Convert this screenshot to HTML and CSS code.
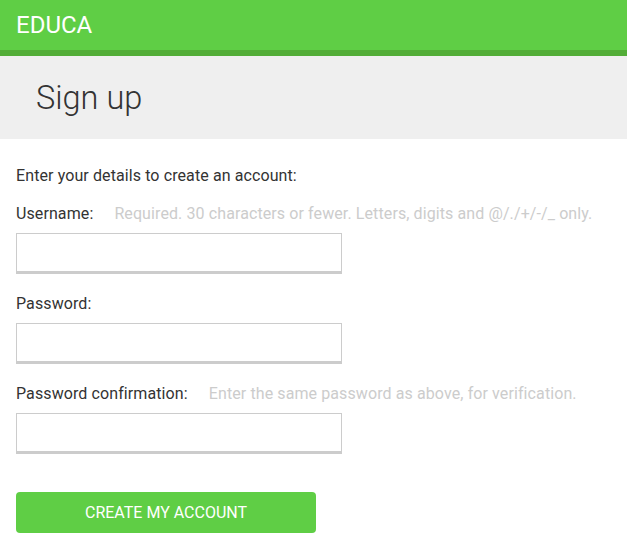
FILE: index.html
```html
<!DOCTYPE html>
<html>
<head>
<meta charset="utf-8">
<title>Sign up</title>
<link rel="stylesheet" href="styles.css">
</head>
<body>
<header class="topbar"><span class="logo">EDUCA</span></header>
<div class="title-band"><h1 class="title">Sign up</h1></div>
<main class="content">
  <p class="intro">Enter your details to create an account:</p>
  <form class="form">
    <div class="field">
      <div class="label-row"><label class="label">Username:</label><span class="help">Required. 30 characters or fewer. Letters, digits and @/./+/-/_ only.</span></div>
      <input class="input" type="text">
    </div>
    <div class="field">
      <div class="label-row"><label class="label">Password:</label></div>
      <input class="input" type="password">
    </div>
    <div class="field">
      <div class="label-row"><label class="label">Password confirmation:</label><span class="help">Enter the same password as above, for verification.</span></div>
      <input class="input" type="password">
    </div>
    <button class="submit" type="button">CREATE MY ACCOUNT</button>
  </form>
</main>
</body>
</html>
```
FILE: styles.css
```css
html, body {
  margin: 0;
  padding: 0;
  background: #fff;
  font-family: Roboto, "Liberation Sans", sans-serif;
  color: #333;
}
.topbar {
  height: 50px;
  background: #5fce45;
  border-bottom: 6px solid #52ad37;
  padding-left: 16px;
  display: flex;
  align-items: center;
}
.logo {
  color: #fff;
  font-size: 24px;
  line-height: 50px;
}
.title-band {
  background: #efefef;
  height: 83px;
  display: flex;
  align-items: center;
  padding-left: 36px;
}
.title {
  margin: 0;
  font-size: 32.5px;
  font-weight: 300;
  color: #333;
  line-height: 40px;
}
.content {
  padding: 0 16px;
}
.intro {
  margin: 27px 0 0;
  font-size: 16px;
  line-height: 20px;
  letter-spacing: 0.1px;
}
.form {
  display: flex;
  flex-direction: column;
}
.field {
  margin-top: 18px;
  display: flex;
  flex-direction: column;
  gap: 9px;
}
.field + .field {
  margin-top: 20px;
}
.label-row {
  display: flex;
  gap: 21px;
  font-size: 16px;
  line-height: 20px;
  letter-spacing: 0.1px;
}
.help {
  color: #ccc;
}
.input {
  box-sizing: border-box;
  width: 326px;
  height: 41px;
  margin: 0;
  border: 1px solid #ccc;
  border-bottom: 3px solid #ccc;
  background: #fff;
  outline: none;
}
.submit {
  margin-top: 38px;
  width: 300px;
  height: 41px;
  border: none;
  border-radius: 4px;
  background: #5fce45;
  color: #fff;
  font-family: Roboto, "Liberation Sans", sans-serif;
  font-size: 16px;
  cursor: pointer;
}
```
